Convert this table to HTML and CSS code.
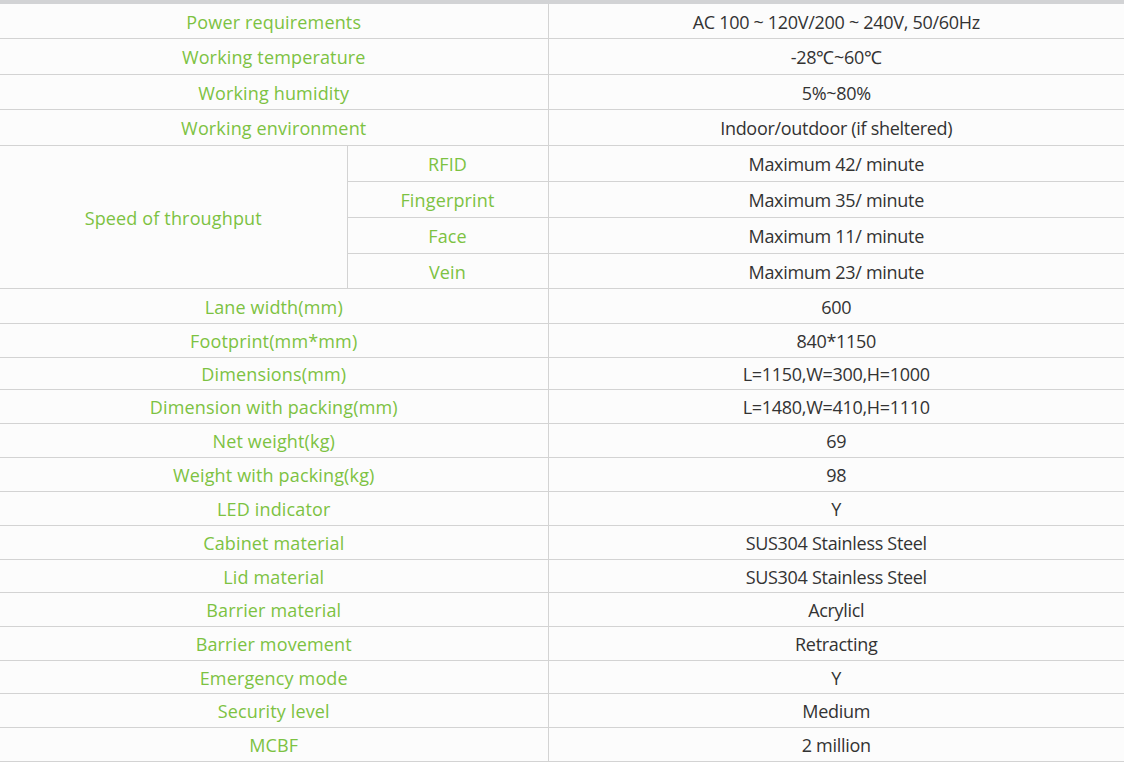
FILE: index.html
```html
<!DOCTYPE html>
<html>
<head>
<meta charset="utf-8">
<link rel="stylesheet" href="styles.css">
</head>
<body>
<div class="topbar"></div>
<table class="spec">
  <colgroup><col class="c1"><col class="c2"><col class="c3"></colgroup>
  <tbody>
    <tr class="h34"><td class="lab" colspan="2">Power requirements</td><td class="val">AC 100 ~ 120V/200 ~ 240V, 50/60Hz</td></tr>
    <tr class="h36"><td class="lab" colspan="2">Working temperature</td><td class="val">-28℃~60℃</td></tr>
    <tr class="h35"><td class="lab" colspan="2">Working humidity</td><td class="val">5%~80%</td></tr>
    <tr class="h36"><td class="lab" colspan="2">Working environment</td><td class="val">Indoor/outdoor (if sheltered)</td></tr>
    <tr class="h36"><td class="lab" rowspan="4">Speed of throughput</td><td class="lab sub">RFID</td><td class="val">Maximum 42/ minute</td></tr>
    <tr class="h36"><td class="lab sub">Fingerprint</td><td class="val">Maximum 35/ minute</td></tr>
    <tr class="h36"><td class="lab sub">Face</td><td class="val">Maximum 11/ minute</td></tr>
    <tr class="h35"><td class="lab sub">Vein</td><td class="val">Maximum 23/ minute</td></tr>
    <tr class="h35"><td class="lab" colspan="2">Lane width(mm)</td><td class="val">600</td></tr>
    <tr class="h34"><td class="lab" colspan="2">Footprint(mm*mm)</td><td class="val">840*1150</td></tr>
    <tr class="h32"><td class="lab" colspan="2">Dimensions(mm)</td><td class="val">L=1150,W=300,H=1000</td></tr>
    <tr class="h34"><td class="lab" colspan="2">Dimension with packing(mm)</td><td class="val">L=1480,W=410,H=1110</td></tr>
    <tr class="h34"><td class="lab" colspan="2">Net weight(kg)</td><td class="val">69</td></tr>
    <tr class="h34"><td class="lab" colspan="2">Weight with packing(kg)</td><td class="val">98</td></tr>
    <tr class="h34"><td class="lab" colspan="2">LED indicator</td><td class="val">Y</td></tr>
    <tr class="h34"><td class="lab" colspan="2">Cabinet material</td><td class="val">SUS304 Stainless Steel</td></tr>
    <tr class="h33"><td class="lab" colspan="2">Lid material</td><td class="val">SUS304 Stainless Steel</td></tr>
    <tr class="h34"><td class="lab" colspan="2">Barrier material</td><td class="val">Acrylicl</td></tr>
    <tr class="h34"><td class="lab" colspan="2">Barrier movement</td><td class="val">Retracting</td></tr>
    <tr class="h33"><td class="lab" colspan="2">Emergency mode</td><td class="val">Y</td></tr>
    <tr class="h34"><td class="lab" colspan="2">Security level</td><td class="val">Medium</td></tr>
    <tr class="h34"><td class="lab" colspan="2">MCBF</td><td class="val">2 million</td></tr>
  </tbody>
</table>
</body>
</html>
```

FILE: styles.css
```css
html, body {
  margin: 0;
  padding: 0;
  background: #fcfcfc;
}
body {
  font-family: "Open Sans", "Liberation Sans", sans-serif;
  font-size: 18px;
  width: 1124px;
  height: 762px;
  overflow: hidden;
}
.topbar {
  height: 4px;
  background: #d2d3d5;
}
.spec {
  width: 1124px;
  border-collapse: collapse;
  table-layout: fixed;
}
.c1 { width: 347px; }
.c2 { width: 201px; }
.c3 { width: 576px; }
.spec td {
  padding: 2px 0 0;
  text-align: center;
  vertical-align: middle;
  border-bottom: 1px solid #d3d3d3;
  border-left: 1px solid #d3d3d3;
  line-height: 20px;
  box-sizing: border-box;
}
.spec td:first-child { border-left: none; }
.spec td.sub { border-left: 1px solid #d3d3d3; }
.lab {
  color: #7cc242;
  letter-spacing: 0.15px;
}
.val {
  color: #333333;
  letter-spacing: -0.3px;
}
.h32 td { height: 32px; }
.h33 td { height: 33px; }
.h34 td { height: 34px; }
.h35 td { height: 35px; }
.h36 td { height: 36px; }
```
